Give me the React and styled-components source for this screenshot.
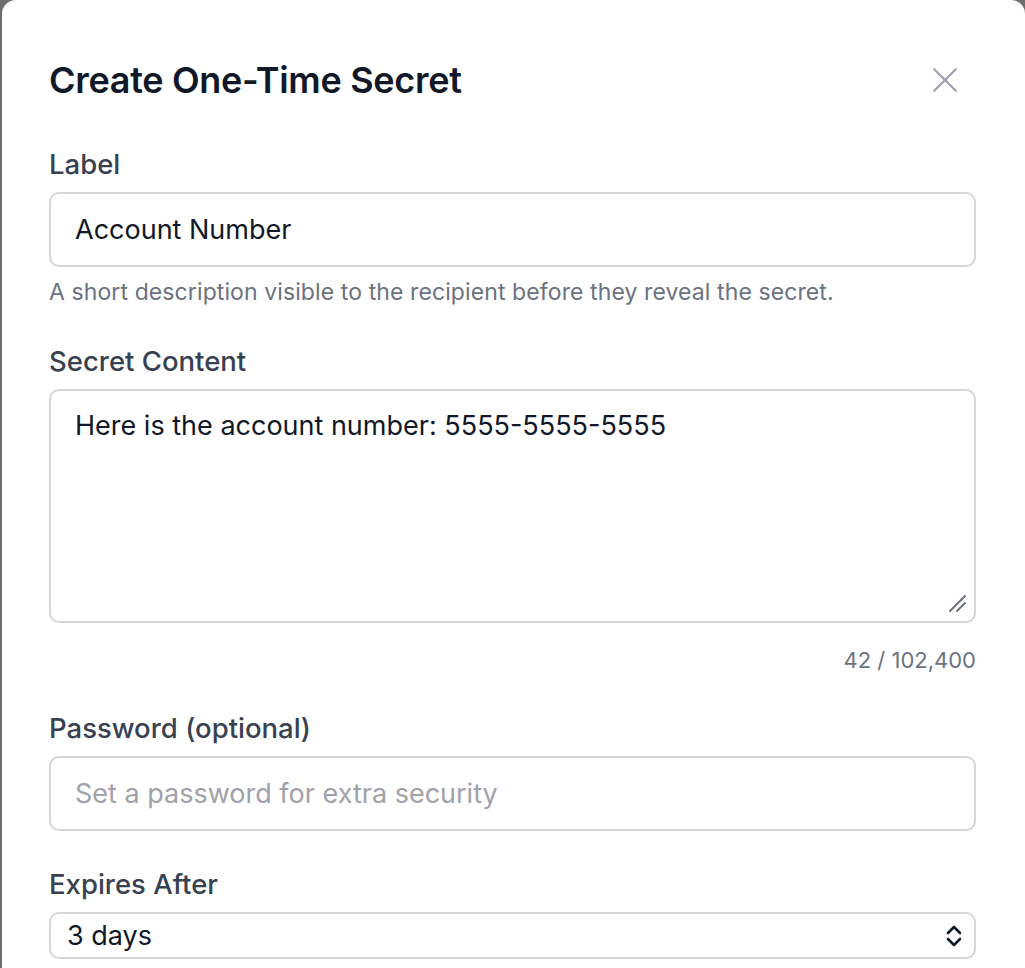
import React from 'react';
import styled, { createGlobalStyle } from 'styled-components';

const GlobalStyle = createGlobalStyle`
  html, body {
    margin: 0;
    background: #6e6e6e;
  }
  * {
    box-sizing: border-box;
  }
`;

const Backdrop = styled.div`
  min-height: 968px;
  padding-left: 2px;
  font-family: 'Inter', 'Liberation Sans', sans-serif;
`;

const Modal = styled.div`
  min-height: 968px;
  background: #ffffff;
  border-radius: 14px 14px 0 0;
  padding: 56px 49px 0 47px;
`;

const Header = styled.div`
  display: flex;
  align-items: center;
  justify-content: space-between;
  margin-bottom: 42px;
`;

const Title = styled.h2`
  margin: 0;
  font-size: 36px;
  line-height: 48px;
  font-weight: 600;
  color: #111827;
  letter-spacing: -0.3px;
`;

const CloseButton = styled.button`
  display: flex;
  align-items: center;
  justify-content: center;
  width: 40px;
  height: 40px;
  margin-right: 11px;
  padding: 0;
  border: none;
  background: transparent;
  color: #9ca3af;
  cursor: pointer;
`;

const Field = styled.div`
  display: flex;
  flex-direction: column;
  margin-bottom: ${(p) => p.$gap || 0}px;
`;

const Label = styled.label`
  font-size: 27.5px;
  line-height: 36px;
  font-weight: 500;
  color: #374151;
  margin-bottom: 10px;
`;

const TextInput = styled.input`
  width: 100%;
  height: 75px;
  padding: 0 24px;
  border: 2px solid #d6d6da;
  border-radius: 10px;
  font-family: inherit;
  font-size: 27px;
  color: #111827;
  background: #ffffff;
  outline: none;

  &::placeholder {
    color: #a1a1aa;
  }
`;

const Hint = styled.p`
  margin: ${(p) => (p.$right ? '22px' : '10px')} 0 0;
  font-size: ${(p) => (p.$right ? '22px' : '23px')};
  letter-spacing: ${(p) => (p.$right ? '0' : '0.1px')};
  line-height: 30px;
  color: #6b7280;
  text-align: ${(p) => (p.$right ? 'right' : 'left')};
`;

const AreaWrap = styled.div`
  position: relative;
`;

const TextArea = styled.textarea`
  display: block;
  width: 100%;
  height: 234px;
  padding: 17px 24px;
  border: 2px solid #d6d6da;
  border-radius: 10px;
  font-family: inherit;
  font-size: 27px;
  line-height: 36px;
  color: #111827;
  resize: none;
  outline: none;
`;

const ResizeGrip = styled.svg`
  position: absolute;
  right: 9px;
  bottom: 10px;
  pointer-events: none;
`;

const SelectWrap = styled.div`
  position: relative;
`;

const Select = styled.select`
  width: 100%;
  height: 47px;
  padding: 0 16px;
  border: 2px solid #d6d6da;
  border-radius: 10px;
  font-family: inherit;
  font-size: 27px;
  color: #111827;
  background: #ffffff;
  appearance: none;
  outline: none;
`;

const SelectArrow = styled.svg`
  position: absolute;
  right: 13px;
  top: 50%;
  transform: translateY(-50%);
  pointer-events: none;
`;

export default function App() {
  return (
    <>
      <GlobalStyle />
      <Backdrop>
        <Modal>
          <Header>
            <Title>Create One-Time Secret</Title>
            <CloseButton aria-label="Close">
              <svg width="26" height="26" viewBox="0 0 24 24" fill="none" stroke="currentColor" strokeWidth="2" strokeLinecap="round">
                <path d="M2 2 L22 22 M22 2 L2 22" />
              </svg>
            </CloseButton>
          </Header>

          <Field $gap={36}>
            <Label>Label</Label>
            <TextInput defaultValue="Account Number" />
            <Hint>A short description visible to the recipient before they reveal the secret.</Hint>
          </Field>

          <Field $gap={35}>
            <Label>Secret Content</Label>
            <AreaWrap>
              <TextArea defaultValue="Here is the account number: 5555-5555-5555" />
              <ResizeGrip width="20" height="20" viewBox="0 0 20 20" fill="none" stroke="#6b7280" strokeWidth="2" strokeLinecap="round">
                <path d="M3 18 L18 3 M10 18 L18 10" />
              </ResizeGrip>
            </AreaWrap>
            <Hint $right>42 / 102,400</Hint>
          </Field>

          <Field $gap={35}>
            <Label>Password (optional)</Label>
            <TextInput type="password" placeholder="Set a password for extra security" />
          </Field>

          <Field>
            <Label>Expires After</Label>
            <SelectWrap>
              <Select defaultValue="3d">
                <option value="1h">1 hour</option>
                <option value="1d">1 day</option>
                <option value="3d">3 days</option>
                <option value="7d">7 days</option>
              </Select>
              <SelectArrow width="18" height="24" viewBox="0 0 18 24" fill="none" stroke="#111827" strokeWidth="2.6" strokeLinecap="round" strokeLinejoin="round">
                <path d="M3 9 L9 3 L15 9 M3 15 L9 21 L15 15" />
              </SelectArrow>
            </SelectWrap>
          </Field>
        </Modal>
      </Backdrop>
    </>
  );
}
